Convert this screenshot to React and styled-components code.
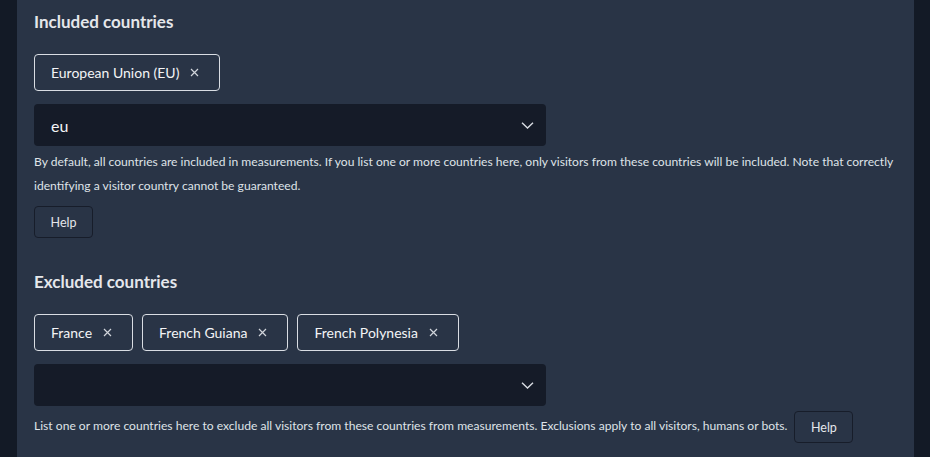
import React from 'react'
import styled, { createGlobalStyle } from 'styled-components'

const GlobalStyle = createGlobalStyle`
  html, body {
    margin: 0;
    padding: 0;
    background: #131a26;
  }
  body {
    font-family: Lato, "Liberation Sans", sans-serif;
    color: #e5e7eb;
  }
`

const Page = styled.div`
  padding: 0 16px 0 17px;
  height: 457px;
  overflow: hidden;
`

const Panel = styled.div`
  background: #293446;
  padding: 10px 17px 40px;
  min-height: 100%;
  box-sizing: border-box;
`

const Section = styled.section`
  margin-bottom: ${p => p.$gap || 0}px;
`

const Heading = styled.h3`
  margin: 0 0 20px;
  font-size: 17px;
  line-height: 24px;
  font-weight: 700;
  color: #e5e7eb;
`

const Chips = styled.div`
  display: flex;
  gap: 9px;
  margin-bottom: 13px;
`

const Chip = styled.div`
  display: flex;
  align-items: center;
  height: 37px;
  box-sizing: border-box;
  padding: 0 20px 0 16px;
  border: 1px solid #d9dde3;
  border-radius: 4px;
  font-size: 14px;
  color: #f3f4f6;
`

const Remove = styled.span`
  display: flex;
  margin-left: 11px;
  color: #d1d5db;
`

const Select = styled.div`
  display: flex;
  align-items: center;
  justify-content: space-between;
  width: 512px;
  height: 42px;
  box-sizing: border-box;
  padding: 0 12px 0 17px;
  background: #151b28;
  border-radius: 4px;
  font-size: 16px;
  color: #f3f4f6;
`

const Hint = styled.p`
  margin: ${p => p.$top}px 0 0;
  font-size: 12.1px;
  line-height: 24px;
  color: #dfe3e8;
`

const HelpButton = styled.button`
  display: ${p => (p.$inline ? 'inline-flex' : 'flex')};
  align-items: center;
  justify-content: center;
  vertical-align: middle;
  width: 59px;
  height: 32px;
  margin: ${p => (p.$inline ? '0 0 0 7px' : '8px 0 0')};
  background: #293446;
  border: 1px solid #171d2a;
  border-radius: 4px;
  font-family: inherit;
  font-size: 12.5px;
  color: #e5e7eb;
`

const Cross = () => (
  <svg width="9" height="9" viewBox="0 0 9 9" fill="none" stroke="currentColor" strokeWidth="1.2">
    <path d="M1 1L8 8M8 1L1 8" />
  </svg>
)

const Chevron = () => (
  <svg width="13" height="7" viewBox="0 0 13 7" fill="none" stroke="#d7dbe1" strokeWidth="1.4">
    <path d="M1 0.7L6.5 6L12 0.7" />
  </svg>
)

const ChipList = ({ items }) => (
  <Chips>
    {items.map(name => (
      <Chip key={name}>
        {name}
        <Remove><Cross /></Remove>
      </Chip>
    ))}
  </Chips>
)

export default function App() {
  return (
    <>
      <GlobalStyle />
      <Page>
        <Panel>
          <Section $gap={32}>
            <Heading>Included countries</Heading>
            <ChipList items={['European Union (EU)']} />
            <Select>
              <span>eu</span>
              <Chevron />
            </Select>
            <Hint $top={4}>
              By default, all countries are included in measurements. If you list one or more countries here, only visitors from these countries will be included. Note that correctly identifying a visitor country cannot be guaranteed.
            </Hint>
            <HelpButton>Help</HelpButton>
          </Section>

          <Section>
            <Heading>Excluded countries</Heading>
            <ChipList items={['France', 'French Guiana', 'French Polynesia']} />
            <Select>
              <span />
              <Chevron />
            </Select>
            <Hint $top={5}>
              List one or more countries here to exclude all visitors from these countries from measurements. Exclusions apply to all visitors, humans or bots.
              <HelpButton $inline>Help</HelpButton>
            </Hint>
          </Section>
        </Panel>
      </Page>
    </>
  )
}
